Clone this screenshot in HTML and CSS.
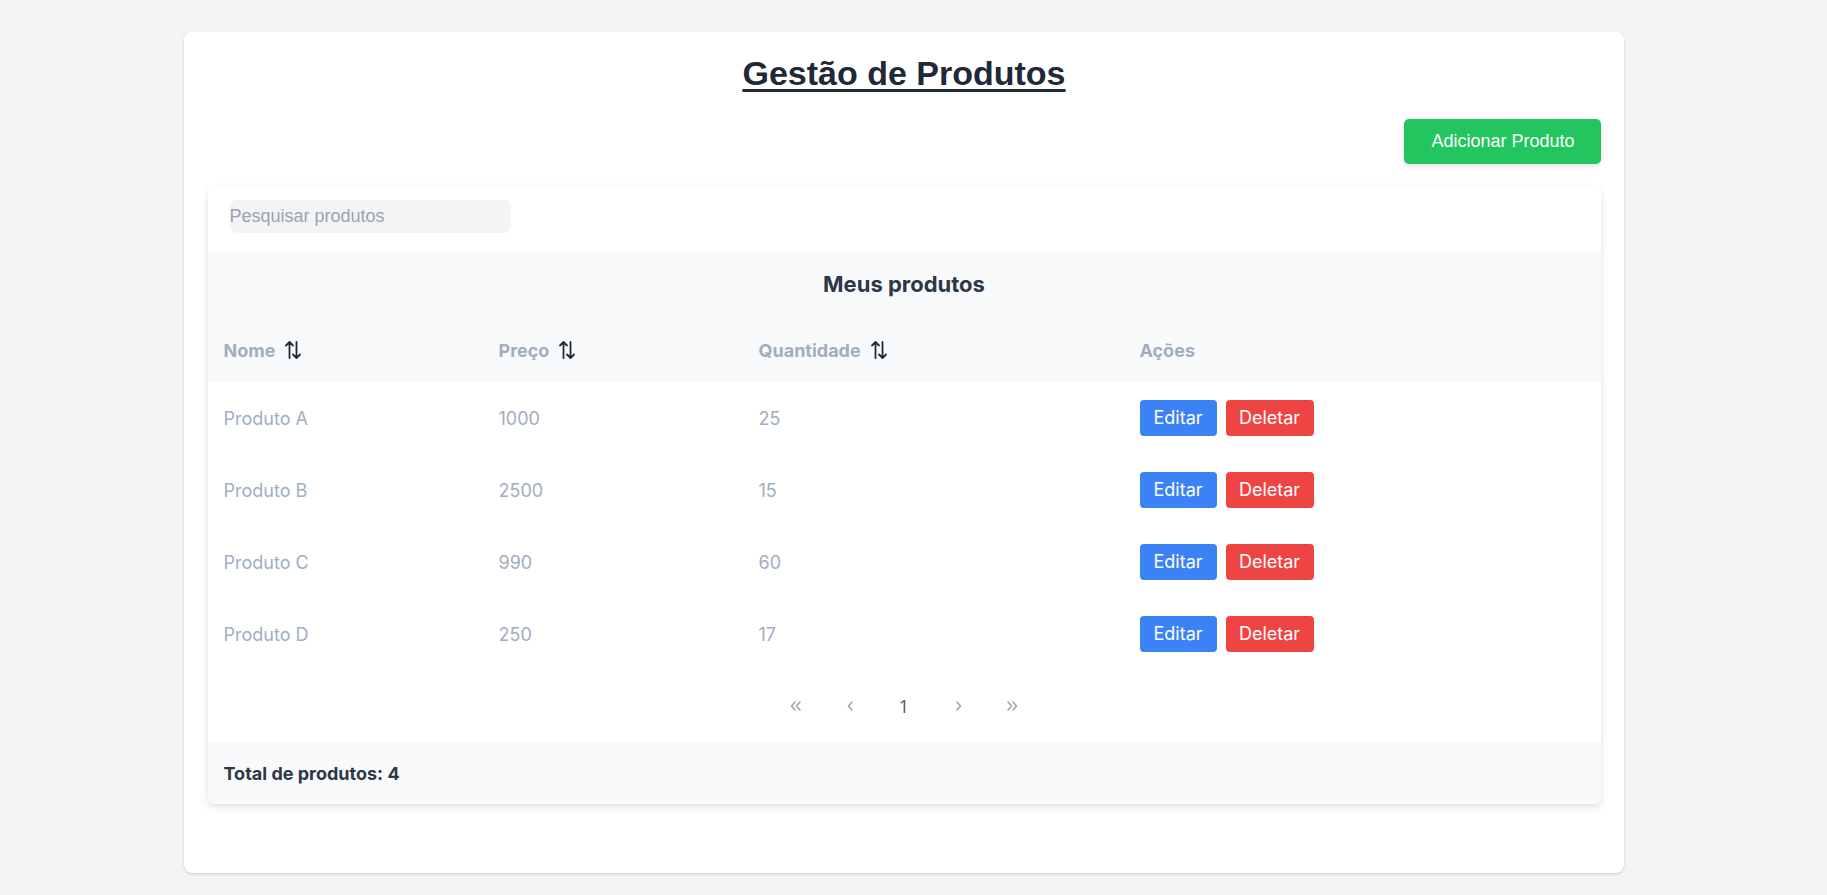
FILE: index.html
```html
<!DOCTYPE html>
<html lang="pt">
<head>
<meta charset="utf-8">
<title>Gestão de Produtos</title>
<link rel="stylesheet" href="styles.css">
</head>
<body>
<div class="page">
  <main class="card">
    <h1 class="title">Gestão de Produtos</h1>
    <div class="toolbar">
      <button class="btn-add">Adicionar Produto</button>
    </div>
    <section class="panel">
      <div class="search-row">
        <input class="search" type="text" placeholder="Pesquisar produtos">
      </div>
      <table class="grid">
        <caption class="caption">Meus produtos</caption>
        <colgroup>
          <col class="c1"><col class="c2"><col class="c3"><col class="c4">
        </colgroup>
        <thead>
          <tr>
            <th><span class="th-in">Nome <svg class="sort" viewBox="0 0 20 20"><path d="M6.5 2V18M3 5.5l3.5-3.5 3.5 3.5M13.5 2v16M10 14.5l3.5 3.5 3.5-3.5"/></svg></span></th>
            <th><span class="th-in">Preço <svg class="sort" viewBox="0 0 20 20"><path d="M6.5 2V18M3 5.5l3.5-3.5 3.5 3.5M13.5 2v16M10 14.5l3.5 3.5 3.5-3.5"/></svg></span></th>
            <th><span class="th-in">Quantidade <svg class="sort" viewBox="0 0 20 20"><path d="M6.5 2V18M3 5.5l3.5-3.5 3.5 3.5M13.5 2v16M10 14.5l3.5 3.5 3.5-3.5"/></svg></span></th>
            <th>Ações</th>
          </tr>
        </thead>
        <tbody>
          <tr><td>Produto A</td><td>1000</td><td>25</td><td><div class="actions"><button class="btn-edit">Editar</button><button class="btn-del">Deletar</button></div></td></tr>
          <tr><td>Produto B</td><td>2500</td><td>15</td><td><div class="actions"><button class="btn-edit">Editar</button><button class="btn-del">Deletar</button></div></td></tr>
          <tr><td>Produto C</td><td>990</td><td>60</td><td><div class="actions"><button class="btn-edit">Editar</button><button class="btn-del">Deletar</button></div></td></tr>
          <tr><td>Produto D</td><td>250</td><td>17</td><td><div class="actions"><button class="btn-edit">Editar</button><button class="btn-del">Deletar</button></div></td></tr>
        </tbody>
      </table>
      <nav class="pager">
        <span class="pg"><svg class="chev" viewBox="0 0 14 12"><path d="M6 2L2.5 6 6 10M11 2L7.5 6 11 10"/></svg></span>
        <span class="pg"><svg class="chev1" viewBox="0 0 7 12"><path d="M5 2L1.5 6 5 10"/></svg></span>
        <span class="pg num">1</span>
        <span class="pg"><svg class="chev1" viewBox="0 0 7 12"><path d="M2 2l3.5 4L2 10"/></svg></span>
        <span class="pg"><svg class="chev" viewBox="0 0 14 12"><path d="M3 2l3.5 4L3 10M8 2l3.5 4L8 10"/></svg></span>
      </nav>
      <footer class="total">Total de produtos: 4</footer>
    </section>
  </main>
</div>
</body>
</html>
```

FILE: styles.css
```css
* { box-sizing: border-box; }
html, body { margin: 0; }
body {
  background: #f3f4f6;
  font-family: Inter, "Noto Sans", sans-serif;
  padding: 32px 20px 22px 0;
}
.page { width: 100%; }
.card {
  width: 1440px;
  margin: 0 auto;
  background: #fff;
  border-radius: 8px;
  box-shadow: 0 1px 3px rgba(0,0,0,0.12), 0 1px 2px rgba(0,0,0,0.06);
  padding: 22px 23px 69px 24px;
}
.title {
  margin: 0;
  text-align: center;
  font-family: "Liberation Sans", Arial, sans-serif;
  font-weight: 700;
  font-size: 34px;
  line-height: 39px;
  color: #1f2937;
  text-decoration: underline;
  text-decoration-thickness: 3px;
  text-underline-offset: 4px;
}
.toolbar {
  display: flex;
  justify-content: flex-end;
  margin-top: 26px;
}
.btn-add {
  font-family: "Liberation Sans", Arial, sans-serif;
  font-size: 18px;
  line-height: 21px;
  color: #fff;
  background: #22c55e;
  border: 0;
  border-radius: 5px;
  padding: 12px 26px 12px 27px;
  box-shadow: 0 2px 4px rgba(0,0,0,0.12);
}
.panel {
  margin-top: 22px;
  background: #fff;
  box-shadow: 0 4px 10px rgba(0,0,0,0.08), 0 2px 4px rgba(0,0,0,0.05);
  border-radius: 6px;
  overflow: hidden;
}
.search-row { padding: 14px 22px 18px; }
.search {
  display: block;
  width: 281px;
  height: 33px;
  border: 0;
  border-radius: 7px;
  background: #f3f4f6;
  padding: 0;
  font-family: "Liberation Sans", Arial, sans-serif;
  font-size: 18px;
  color: #374151;
  outline: none;
}
.search::placeholder { color: #9ca3af; }
.grid {
  width: 100%;
  border-collapse: collapse;
  table-layout: fixed;
}
.c1 { width: 275px; }
.c2 { width: 260px; }
.c3 { width: 381px; }
.caption {
  background: #f9fafb;
  color: #2d3748;
  font-weight: 700;
  font-size: 22px;
  height: 67px;
  line-height: 67px;
  text-align: center;
}
thead tr { background: #f9fafb; }
th {
  height: 64px;
  padding: 0 0 0 16px;
  text-align: left;
  font-weight: 700;
  font-size: 18px;
  color: #a0aec0;
}
.th-in { display: inline-flex; align-items: center; gap: 8px; }
.sort {
  width: 20px;
  height: 20px;
  fill: none;
  stroke: #1f2937;
  stroke-width: 1.8;
  stroke-linecap: round;
  stroke-linejoin: round;
}
td {
  height: 72px;
  padding: 0 0 0 16px;
  font-size: 18px;
  color: #a0aec0;
}
.actions { display: flex; gap: 9px; }
.btn-edit, .btn-del {
  font-family: Inter, "Noto Sans", sans-serif;
  font-size: 18px;
  line-height: 20px;
  color: #fff;
  border: 0;
  border-radius: 4px;
  padding: 8px 0;
  height: 36px;
}
.btn-edit { background: #3b82f6; width: 77px; }
.btn-del { background: #ef4444; width: 88px; }
.pager {
  display: flex;
  justify-content: center;
  align-items: center;
  height: 72px;
}
.pg {
  width: 54px;
  display: flex;
  justify-content: center;
  align-items: center;
  color: #9ca3af;
}
.chev { width: 14px; height: 12px; fill: none; stroke: #9ca3af; stroke-width: 1.5; stroke-linecap: round; stroke-linejoin: round; }
.chev1 { width: 7px; height: 12px; fill: none; stroke: #9ca3af; stroke-width: 1.5; stroke-linecap: round; stroke-linejoin: round; }
.num {
  font-family: "Open Sans", sans-serif;
  font-size: 18px;
  color: #57534e;
}
.total {
  background: #f9fafb;
  height: 62px;
  display: flex;
  align-items: center;
  padding-left: 16px;
  font-weight: 700;
  font-size: 18px;
  color: #2d3748;
}
```
